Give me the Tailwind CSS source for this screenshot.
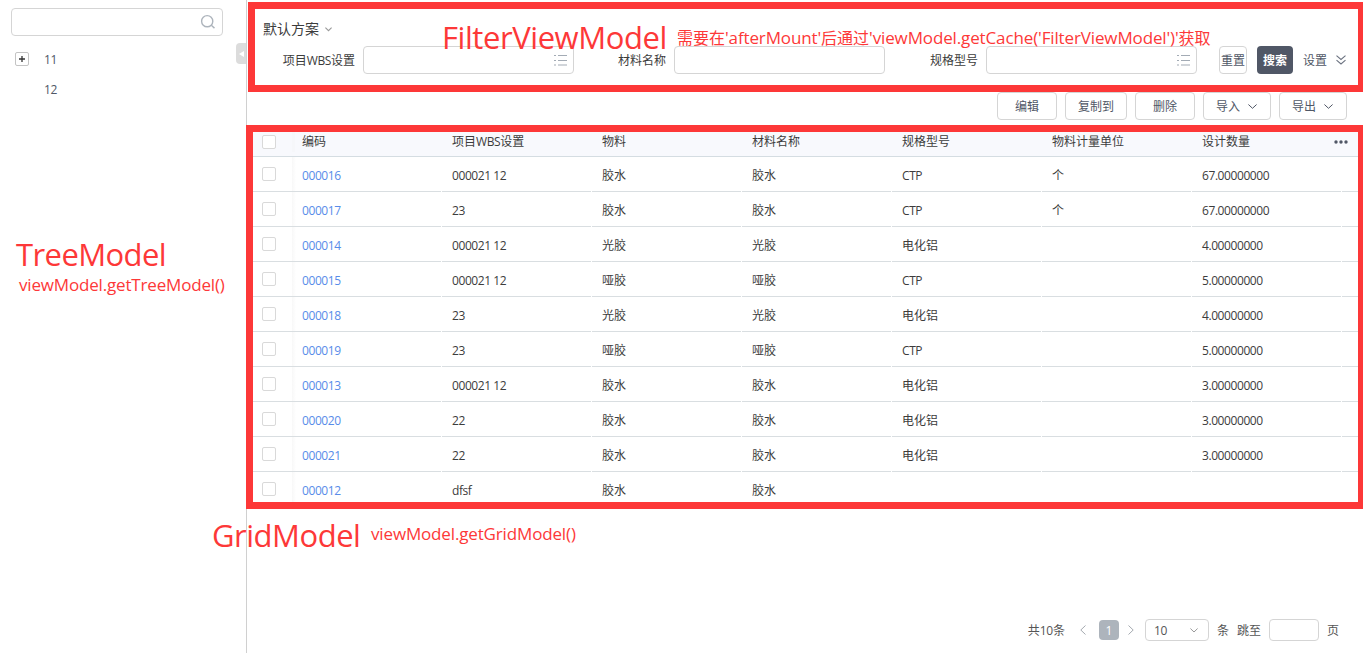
<!DOCTYPE html>
<html lang="zh-CN">
<head>
<meta charset="utf-8">
<title>项目物料</title>
<script src="https://cdn.jsdelivr.net/npm/@tailwindcss/browser@4"></script>
</head>
<body class="relative flex h-[653px] w-[1363px] overflow-hidden bg-white font-['Open_Sans','Noto_Sans_CJK_SC',sans-serif] text-xs text-[#3c3c3c]">

<aside class="w-[247px] shrink-0 border-r border-[#d0d0d0] pl-[11px] pt-2">
  <div class="flex h-7 w-[212px] items-center justify-end rounded border border-[#d5d5d5] pr-[6px]">
    <svg class="size-4" viewBox="0 0 16 16" fill="none" stroke="#adb4bc" stroke-width="1.4"><circle cx="7.2" cy="7.2" r="5.6"/><path d="M11.300 11.300l3.200 2.800"/></svg>
  </div>
  <ul class="pt-2 text-[#505766]">
    <li class="flex h-[30px] items-center pl-1">
      <span class="flex size-[14px] items-center justify-center rounded-[2px] border border-[#c4c4c4]">
        <svg class="size-[6px]" viewBox="0 0 6 6" stroke="#333" stroke-width="1.300"><path d="M0 3h6M3 0v6"/></svg>
      </span>
      <span class="pl-[15px] pt-[2px] tracking-[-0.4px]">11</span>
    </li>
    <li class="flex h-[30px] items-center pl-[33px] pt-[2px] tracking-[-0.4px]">12</li>
  </ul>
</aside>
<div class="absolute left-[236px] top-[43px] flex h-[21px] w-[10px] items-center justify-center rounded-l bg-[#dcdcdc]">
  <svg class="h-[6px] w-[5px]" viewBox="0 0 5 6"><path d="M5 0v6L0 3z" fill="#fff"/></svg>
</div>

<main class="flex min-w-0 flex-1 flex-col">
  <section class="ml-px mt-[2px] h-[90px] shrink-0 border-[7px] border-r-[5px] border-[#fd3838]">
    <div class="flex h-[37px] items-center pl-2 pt-[3px] text-sm">
      <span>默认方案</span>
      <svg class="ml-[6px] h-[5px] w-[7px]" viewBox="0 0 7 5" fill="none" stroke="#999" stroke-width="1.100"><path d="M0.4 0.7l3.1 3 3.1-3"/></svg>
    </div>
    <div class="flex h-7 items-center">
      <label class="w-[108px] pr-2 pt-[2px] text-right"><span>项目</span><span class="tracking-[-0.4px]">WBS</span>设置</label>
      <div class="flex h-7 w-[211px] items-center justify-end rounded border border-[#d5d5d5] pr-[6px]">
        <svg class="h-3 w-[13px]" viewBox="0 0 13 12" stroke="#a3abb5" stroke-width="1.200"><path d="M0 1.500h2M4 1.500h9M0 6.500h2M4 6.500h9M0 11h2M4 11h9"/></svg>
      </div>
      <label class="w-[100px] pr-2 pt-[2px] text-right">材料名称</label>
      <div class="h-7 w-[211px] rounded border border-[#d5d5d5]"></div>
      <label class="w-[101px] pr-2 pt-[2px] text-right">规格型号</label>
      <div class="flex h-7 w-[211px] items-center justify-end rounded border border-[#d5d5d5] pr-[6px]">
        <svg class="h-3 w-[13px]" viewBox="0 0 13 12" stroke="#a3abb5" stroke-width="1.200"><path d="M0 1.500h2M4 1.500h9M0 6.500h2M4 6.500h9M0 11h2M4 11h9"/></svg>
      </div>
      <button class="ml-[22px] flex h-7 w-7 items-center justify-center whitespace-nowrap rounded border border-[#d5d5d5] pt-[2px] text-[#505766]">重置</button>
      <button class="ml-[10px] h-7 w-9 rounded bg-[#505766] pt-[2px] font-bold text-white">搜索</button>
      <span class="ml-[10px] pt-[2px] text-[#505766]">设置</span>
      <svg class="ml-[9px] h-[10px] w-[10px]" viewBox="0 0 10 10" fill="none" stroke="#6b7280" stroke-width="1.100"><path d="M.5 .7L5 4.5 9.500 .7M.5 5.200L5 9l4.500-3.800"/></svg>
    </div>
  </section>

  <div class="flex h-[33px] shrink-0 justify-end gap-2 pr-4 text-[#505766]">
    <button class="h-7 w-[60px] rounded border border-[#d5d5d5] pt-[2px]">编辑</button>
    <button class="h-7 w-[62px] rounded border border-[#d5d5d5] pt-[2px]">复制到</button>
    <button class="h-7 w-[60px] rounded border border-[#d5d5d5] pt-[2px]">删除</button>
    <button class="flex h-7 w-[68px] items-center rounded border border-[#d5d5d5] pl-3"><span class="pt-[2px]">导入</span><svg class="ml-2 h-[5px] w-[9px]" viewBox="0 0 9 5" fill="none" stroke="#505766"><path d="M.4 .5l4.100 3.800L8.600 .5"/></svg></button>
    <button class="flex h-7 w-[68px] items-center rounded border border-[#d5d5d5] pl-3"><span class="pt-[2px]">导出</span><svg class="ml-2 h-[5px] w-[9px]" viewBox="0 0 9 5" fill="none" stroke="#505766"><path d="M.4 .5l4.100 3.800L8.600 .5"/></svg></button>
  </div>

  <section class="-ml-px h-[384px] shrink-0 overflow-hidden border-[7px] border-r-[5px] border-[#fd3838]">
    <div class="flex h-[25px] border-b border-[#d5dde2] bg-[#f8f9fd]">
      <div class="w-[39px] shrink-0 pl-[9px] pt-[3px]"><span class="block size-[14px] rounded-[2px] border border-[#d9d9d9] bg-white"></span></div>
      <div class="flex h-5 min-w-0 flex-1 items-center border-l-[3px] border-[#f6f7fa]" id="head"></div>
      <svg class="mr-[10px] mt-2 h-1 w-[14px]" viewBox="0 0 14 4" fill="#505766"><circle cx="2" cy="2" r="1.700"/><circle cx="7" cy="2" r="1.700"/><circle cx="12" cy="2" r="1.700"/></svg>
    </div>
    <div id="rows"></div>
  </section>

  <footer class="mt-auto flex h-[46px] items-center justify-end pr-6 text-[#555]">
    <span class="pt-[2px]">共<span class="tracking-[-0.3px]">10</span>条</span>
    <svg class="ml-[15px] h-[10px] w-[6px]" viewBox="0 0 6 10" fill="none" stroke="#a5aab0"><path d="M5.500 .5L.8 5l4.700 4.500"/></svg>
    <span class="ml-[13px] flex size-5 items-center justify-center rounded bg-[#adb4bc] pt-[2px] text-white">1</span>
    <svg class="ml-[9px] h-[10px] w-[6px]" viewBox="0 0 6 10" fill="none" stroke="#a5aab0"><path d="M.5 .5L5.200 5 .5 9.500"/></svg>
    <div class="ml-[11px] flex h-[22px] w-16 items-center justify-between rounded border border-[#d5d5d5] pl-[8px] pr-[10px]"><span class="pt-[2px] tracking-[-0.4px]">10</span><svg class="h-[5px] w-2" viewBox="0 0 8 5" fill="none" stroke="#999"><path d="M.4 .5L4 4 7.600 .5"/></svg></div>
    <span class="ml-2 pt-[2px]">条</span>
    <span class="ml-2 pt-[2px]">跳至</span>
    <div class="ml-2 h-[22px] w-[50px] rounded border border-[#d5d5d5]"></div>
    <span class="ml-2 pt-[2px]">页</span>
  </footer>
</main>

<!-- Model annotations floating over the page -->
<div class="pointer-events-none absolute inset-0 whitespace-nowrap text-[#fd3838]">
  <span class="absolute left-[442px] top-[17px] text-[31px] leading-10 tracking-[-0.43px]">FilterViewModel</span>
  <span class="absolute left-[677px] top-[26px] text-[17px] leading-6 tracking-[-0.13px]"><span class="text-base tracking-normal">需要在</span>'afterMount'<span class="text-base tracking-normal">后通过</span>'viewModel.getCache('FilterViewModel')'<span class="text-base tracking-normal">获取</span></span>
  <span class="absolute left-[16px] top-[234px] text-[31px] leading-10 tracking-[-0.58px]">TreeModel</span>
  <span class="absolute left-[19px] top-[273px] text-[17px] leading-6 tracking-[-0.17px]">viewModel.getTreeModel()</span>
  <span class="absolute left-[212px] top-[515px] text-[31px] leading-10 tracking-[-0.48px]">GridModel</span>
  <span class="absolute left-[371px] top-[522px] text-[17px] leading-6 tracking-[-0.15px]">viewModel.getGridModel()</span>
</div>

<script>
const heads = ['编码', '项目WBS设置', '物料', '材料名称', '规格型号', '物料计量单位', '设计数量'];
const data = [
  ['000016', '000021 12', '胶水', '胶水', 'CTP', '个', '67.00000000'],
  ['000017', '23', '胶水', '胶水', 'CTP', '个', '67.00000000'],
  ['000014', '000021 12', '光胶', '光胶', '电化铝', '', '4.00000000'],
  ['000015', '000021 12', '哑胶', '哑胶', 'CTP', '', '5.00000000'],
  ['000018', '23', '光胶', '光胶', '电化铝', '', '4.00000000'],
  ['000019', '23', '哑胶', '哑胶', 'CTP', '', '5.00000000'],
  ['000013', '000021 12', '胶水', '胶水', '电化铝', '', '3.00000000'],
  ['000020', '22', '胶水', '胶水', '电化铝', '', '3.00000000'],
  ['000021', '22', '胶水', '胶水', '电化铝', '', '3.00000000'],
  ['000012', 'dfsf', '胶水', '胶水', '', '', '']
];
const latin = t => t.replace(/[\w. ]+/g, '<span class="tracking-[-0.42px]">$&</span>');
document.getElementById('head').innerHTML = heads.map((h, i) =>
  `<div class="${i ? 'w-[150px] shrink-0 pl-[10px]' : 'w-[147px] shrink-0 pl-[7px]'}">${latin(h)}</div>`).join('');
document.getElementById('rows').innerHTML = data.map(r =>
  '<div class="flex h-[35px]"><div class="w-[39px] shrink-0 border-b border-[#d9dee1] pl-[9px] pt-[10px]"><span class="block size-[14px] rounded-[2px] border border-[#d9d9d9]"></span></div>' +
  r.map((c, i) => `<div class="mr-px flex w-[149px] shrink-0 items-center border-b border-[#d9dee1] pt-[3px] ${i ? 'pl-[10px]' : 'bg-linear-to-r from-[#f8f8f8] from-0% to-white to-[4px] pl-[10px] text-[#588ce9]'}"><span>${latin(c)}</span></div>`).join('') +
  '<div class="flex-1 border-b border-[#d9dee1]"></div></div>').join('');
</script>
</body>
</html>
